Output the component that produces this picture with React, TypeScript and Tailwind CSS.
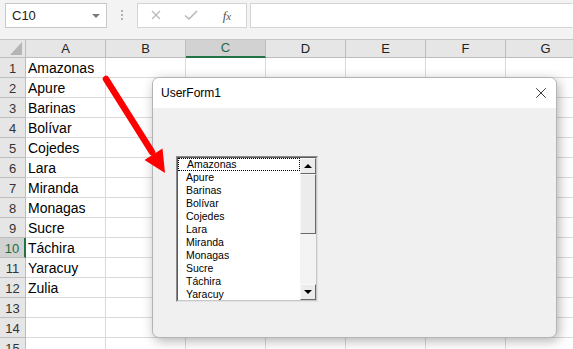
import { X } from "lucide-react";

const COLS = ["A", "B", "C", "D", "E", "F", "G"];
const STATES = [
  "Amazonas",
  "Apure",
  "Barinas",
  "Bolívar",
  "Cojedes",
  "Lara",
  "Miranda",
  "Monagas",
  "Sucre",
  "Táchira",
  "Yaracuy",
  "Zulia",
];
const ROWS = Array.from({ length: 15 }, (_, i) => i + 1);

function Toolbar() {
  return (
    <div className="flex h-[39px] items-start gap-0 bg-[#f3f3f3] pl-[5px] pt-[3px]">
      <div className="flex h-[25px] w-[102px] items-center justify-between border border-[#c8c8c8] bg-white pl-[6px] pr-[6px] text-[13px] text-[#222]">
        <span>C10</span>
        <span className="h-0 w-0 border-x-[4px] border-t-[4px] border-x-transparent border-t-[#7a7a7a]" />
      </div>
      <div className="flex w-[30px] flex-col items-center gap-[2px] pt-[7px]">
        <span className="h-[2px] w-[2px] bg-[#b0b0b0]" />
        <span className="h-[2px] w-[2px] bg-[#b0b0b0]" />
        <span className="h-[2px] w-[2px] bg-[#b0b0b0]" />
      </div>
      <div className="flex h-[25px] w-[110px] items-center border border-[#d4d4d4] bg-white">
        <svg width="36" height="25" viewBox="0 0 36 25">
          <path d="M14 8 L22 16 M22 8 L14 16" stroke="#b8b8b8" strokeWidth="1.2" />
        </svg>
        <svg width="36" height="25" viewBox="0 0 36 25">
          <path d="M11 12.5 L15 16 L23 8" stroke="#b8b8b8" strokeWidth="1.6" fill="none" />
        </svg>
        <span className="w-[34px] text-center font-['Liberation_Serif'] text-[13px] italic text-[#555]">
          f<span className="text-[11px]">x</span>
        </span>
      </div>
      <div className="ml-[3px] h-[25px] flex-1 border border-y-[#d4d4d4] border-l-[#d4d4d4] border-r-transparent bg-white" />
    </div>
  );
}

function Sheet() {
  return (
    <div className="border-t border-[#c6c6c6]">
      <div className="flex h-[18px]">
        <div className="relative h-[18px] w-[26px] shrink-0 border-b border-r border-[#bdbdbd] bg-[#e6e6e6]">
          <svg className="absolute left-[10px] top-[2px]" width="12" height="13" viewBox="0 0 12 13">
            <path d="M12 0 L12 13 L0 13 Z" fill="#b5b5b5" />
          </svg>
        </div>
        {COLS.map((c) => (
          <div
            key={c}
            className={`flex h-[18px] w-[80px] shrink-0 items-center justify-center border-r text-[13px] ${
              c === "C"
                ? "border-b-2 border-b-[#217346] border-r-[#bdbdbd] bg-[#d2d2d2] text-[#1e6b40]"
                : "border-b border-[#bdbdbd] bg-[#e6e6e6] text-[#222]"
            }`}
          >
            {c}
          </div>
        ))}
      </div>
      {ROWS.map((r) => (
        <div key={r} className="flex h-[20px]">
          <div
            className={`flex h-[20px] w-[26px] shrink-0 items-center justify-center border-b pt-[2px] text-[13px] ${
              r === 10
                ? "border-b-[#bdbdbd] border-r-2 border-r-[#217346] bg-[#d2d2d2] text-[#1e6b40]"
                : "border-r border-[#bdbdbd] bg-[#e6e6e6] text-[#333]"
            }`}
          >
            {r}
          </div>
          {COLS.map((c, i) => (
            <div
              key={c}
              className="flex h-[20px] w-[80px] shrink-0 items-center border-b border-r border-[#dadada] pl-[2px] pt-[2px] text-[14px] text-black"
            >
              {i === 0 ? STATES[r - 1] ?? "" : ""}
            </div>
          ))}
        </div>
      ))}
    </div>
  );
}

function ScrollButton({ down }: { down?: boolean }) {
  return (
    <div className="flex h-[16px] w-[16px] items-center justify-center border border-b-[#696969] border-l-[#f8f8f8] border-r-[#696969] border-t-[#f8f8f8] bg-[#ececec]">
      {down ? (
        <span className="h-0 w-0 border-x-[4px] border-t-[4px] border-x-transparent border-t-black" />
      ) : (
        <span className="h-0 w-0 border-x-[4px] border-b-[4px] border-x-transparent border-b-black" />
      )}
    </div>
  );
}

function ListBox() {
  return (
    <div className="flex h-[146px] w-[142px] border border-b-[#e3e3e3] border-l-[#8a8a8a] border-r-[#e3e3e3] border-t-[#8a8a8a]">
      <div className="flex flex-1 border border-b-[#c8c8c8] border-l-[#5a5a5a] border-r-[#c8c8c8] border-t-[#5a5a5a] bg-white">
        <div className="flex-1 overflow-hidden font-['Liberation_Sans'] text-[10.5px] leading-[13px] text-black">
          {STATES.slice(0, 11).map((s, i) => (
            <div
              key={s}
              className={`h-[13px] pl-[8px] ${i === 0 ? "border border-dotted border-black pl-[7px] leading-[11px]" : ""}`}
            >
              {s}
            </div>
          ))}
        </div>
        <div className="flex w-[16px] flex-col bg-[#f3f3f3]">
          <ScrollButton />
          <div className="h-[60px] w-[16px] border border-b-[#696969] border-l-[#f8f8f8] border-r-[#696969] border-t-[#f8f8f8] bg-[#ececec]" />
          <div className="flex-1" />
          <ScrollButton down />
        </div>
      </div>
    </div>
  );
}

function UserForm() {
  return (
    <div className="absolute left-[152px] top-[77px] flex h-[261px] w-[405px] flex-col overflow-hidden rounded-[7px] border border-[#b4b4b4] bg-[#f0f0f0] shadow-[2px_3px_12px_rgba(0,0,0,0.3)]">
      <div className="flex h-[30px] shrink-0 items-center justify-between bg-white pl-[8px] pr-[6px]">
        <span className="font-['Liberation_Sans'] text-[12px] text-black">UserForm1</span>
        <X className="h-[18px] w-[18px] text-[#111]" strokeWidth={1.1} />
      </div>
      <div className="pl-[23px] pt-[48px]">
        <ListBox />
      </div>
    </div>
  );
}

export default function App() {
  return (
    <div className="relative h-[349px] w-[573px] overflow-hidden bg-white font-['Liberation_Sans',sans-serif]">
      <Toolbar />
      <Sheet />
      <UserForm />
      <svg className="absolute left-0 top-0" width="573" height="349" viewBox="0 0 573 349">
        <line x1="106" y1="79" x2="152" y2="152" stroke="#ff0000" strokeWidth="6.5" strokeLinecap="round" />
        <polygon points="165,173 162.5,148.5 144.5,160" fill="#ff0000" />
      </svg>
    </div>
  );
}
